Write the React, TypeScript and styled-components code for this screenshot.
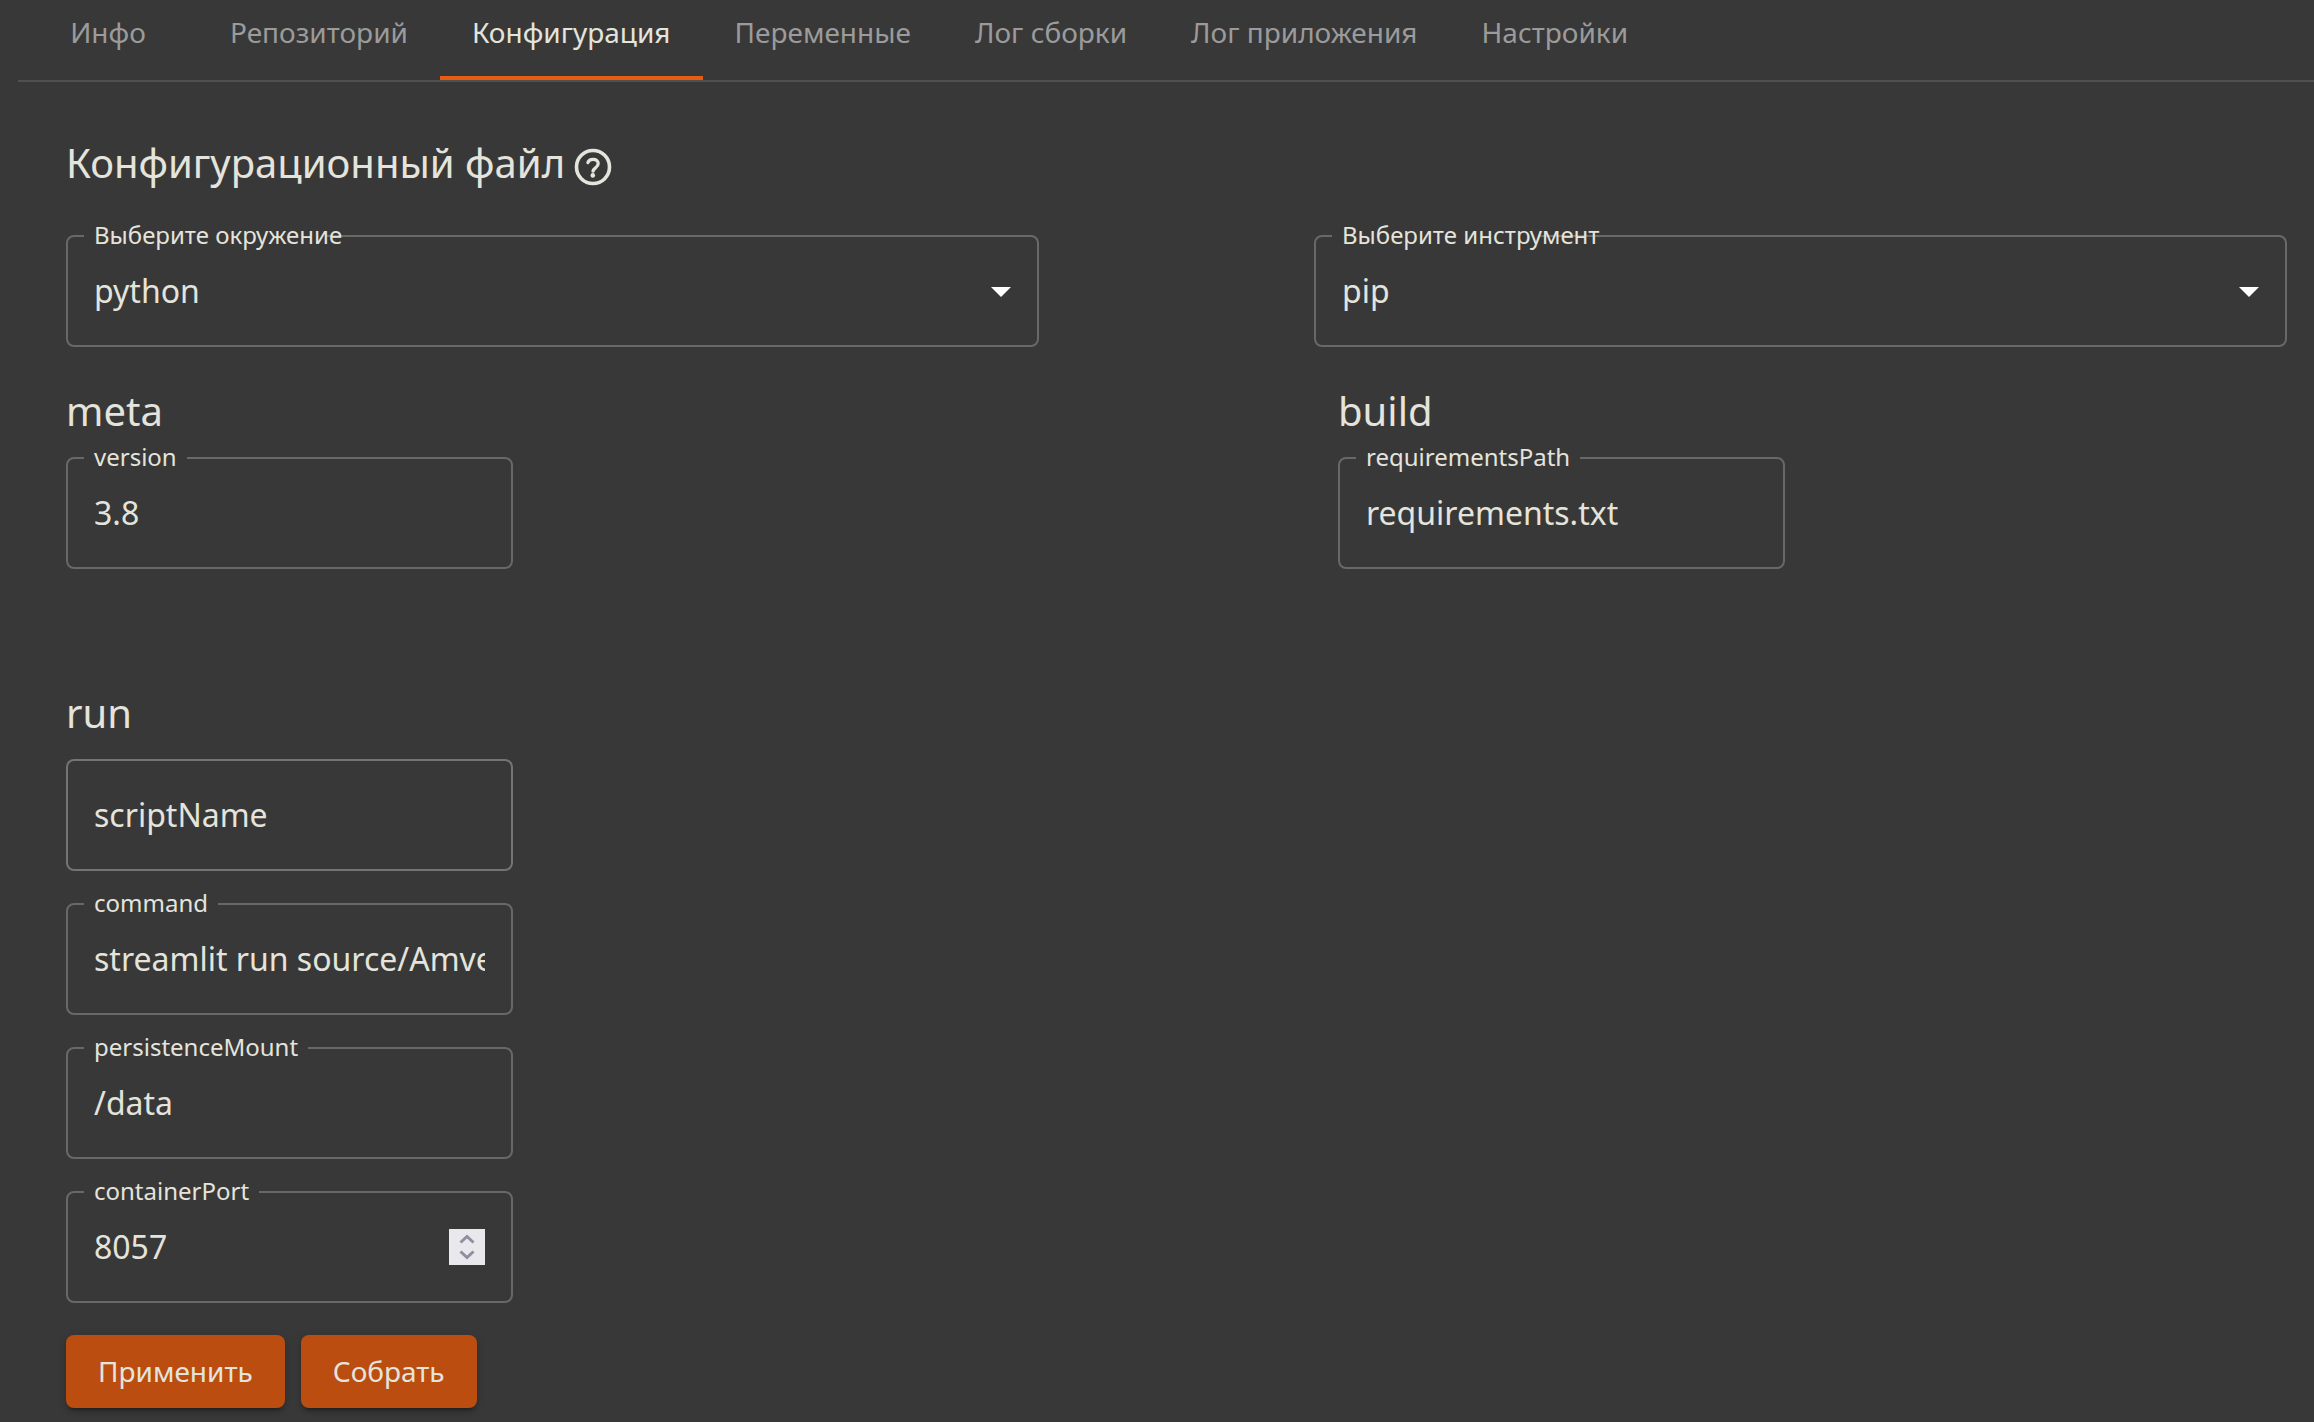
import React from 'react';
import styled, { createGlobalStyle, css } from 'styled-components';

const GlobalStyle = createGlobalStyle`
  *, *::before, *::after { box-sizing: border-box; }
  html, body { margin: 0; background: #383838; }
  body {
    min-height: 1422px;
    overflow: hidden;
    color: #e4e4dc;
    font-family: 'Noto Sans', 'Open Sans', sans-serif;
  }
`;

const Page = styled.div`
  height: 1422px;
  padding-left: 18px;
  overflow: hidden;
`;

const Tabs = styled.nav`
  display: flex;
  height: 82px;
  border-bottom: 2px solid #505050;
`;

const Tab = styled.button<{ $active?: boolean }>`
  min-width: 180px;
  height: 80px;
  padding: 0 32px 12px;
  border: 0;
  border-bottom: 4px solid ${(p) => (p.$active ? '#e65c12' : 'transparent')};
  background: none;
  color: ${(p) => (p.$active ? '#e4e4dc' : '#9b9b9b')};
  font: 400 28px/35px 'Noto Sans', sans-serif;
  white-space: nowrap;
`;

const Content = styled.main`
  padding: 53px 27px 0 48px;
`;

const Title = styled.h1`
  display: flex;
  align-items: center;
  gap: 9px;
  height: 56px;
  margin: 0;
  font-size: 40px;
  font-weight: 400;
  line-height: 56px;
`;

const SectionTitle = styled.h2`
  height: 56px;
  margin: 0;
  font-size: 40px;
  font-weight: 400;
  line-height: 56px;
`;

const HelpIcon = styled.svg`
  width: 38px;
  height: 38px;
  margin-top: 7px;
  fill: none;
  stroke: currentColor;
`;

const SelectRow = styled.div`
  display: flex;
  justify-content: space-between;
  margin-top: 44px;
`;

const Sections = styled.div`
  display: grid;
  grid-template-columns: 1272px 447px;
  margin-top: 36px;
`;

const Section = styled.section<{ $gap?: number }>`
  display: flex;
  flex-direction: column;
  ${(p) =>
    p.$gap &&
    css`
      > h2 { margin-bottom: ${p.$gap}px; }
    `}
`;

const RunSection = styled(Section)`
  width: 447px;
  margin-top: 116px;
`;

const FieldStack = styled.div`
  display: flex;
  flex-direction: column;
  gap: 32px;
`;

const Field = styled.div<{ $wide?: boolean }>`
  width: ${(p) => (p.$wide ? 973 : 447)}px;
  height: 112px;
`;

const Outline = styled.fieldset<{ $labelled: boolean }>`
  display: block;
  min-width: 0;
  width: 100%;
  height: ${(p) => (p.$labelled ? 123 : 112)}px;
  margin: ${(p) => (p.$labelled ? '-11px' : '0')} 0 0;
  padding: 0 26px 0 16px;
  border: 2px solid ${(p) => (p.$labelled ? '#686868' : '#747474')};
  border-radius: 8px;
`;

const Label = styled.legend<{ $notch?: number }>`
  height: 24px;
  padding: 0 10px;
  width: ${(p) => (p.$notch ? `${p.$notch}px` : 'auto')};
  font-size: 24px;
  line-height: 22px;
  white-space: nowrap;
`;

const FieldBody = styled.div<{ $labelled: boolean }>`
  display: flex;
  align-items: center;
  justify-content: space-between;
  height: 46px;
  margin: ${(p) => (p.$labelled ? 20 : 31)}px 0 0 10px;
`;

const Value = styled.span`
  flex: 1;
  overflow: hidden;
  font-size: 32px;
  line-height: 46px;
  white-space: nowrap;
`;

const Arrow = styled.svg`
  width: 48px;
  height: 48px;
  margin-right: -14px;
  fill: #fff;
`;

const Stepper = styled.svg`
  width: 36px;
  height: 36px;
  background: #e9e9ed;
  fill: none;
  stroke: #8f8f9d;
  stroke-width: 3;
`;

const Actions = styled.div`
  display: flex;
  gap: 16px;
  margin-top: 32px;
`;

const Button = styled.button`
  height: 73px;
  padding: 0 32px;
  border: 0;
  border-radius: 8px;
  background: #bb4d10;
  color: #e4e4dc;
  font: 400 28px/49px 'Noto Sans', sans-serif;
  box-shadow: 0 6px 2px -4px rgba(0, 0, 0, 0.2), 0 4px 4px rgba(0, 0, 0, 0.14),
    0 2px 10px rgba(0, 0, 0, 0.12);
`;

type FieldProps = {
  label?: string;
  value: string;
  wide?: boolean;
  notch?: number;
  children?: React.ReactNode;
};

function OutlinedField({ label, value, wide, notch, children }: FieldProps) {
  return (
    <Field $wide={wide}>
      <Outline $labelled={!!label}>
        {label && <Label $notch={notch}>{label}</Label>}
        <FieldBody $labelled={!!label}>
          <Value>{value}</Value>
          {children}
        </FieldBody>
      </Outline>
    </Field>
  );
}

const DropDownArrow = () => (
  <Arrow viewBox="0 0 24 24">
    <path d="M7 10l5 5 5-5z" />
  </Arrow>
);

const tabs = [
  'Инфо',
  'Репозиторий',
  'Конфигурация',
  'Переменные',
  'Лог сборки',
  'Лог приложения',
  'Настройки',
];

export default function App() {
  return (
    <Page>
      <GlobalStyle />
      <Tabs>
        {tabs.map((name) => (
          <Tab key={name} $active={name === 'Конфигурация'}>
            {name}
          </Tab>
        ))}
      </Tabs>
      <Content>
        <Title>
          Конфигурационный файл
          <HelpIcon viewBox="0 0 38 38">
            <circle cx="19" cy="19" r="16.5" strokeWidth="3.6" />
            <path
              d="M13.9 14.6C14.6 12.5 16.5 11.4 19.1 11.4C22.1 11.4 24.2 13 24.2 15.6C24.2 17.6 23 18.7 21.6 19.8C20.1 21 19.2 21.7 19 23.2"
              strokeWidth="3.3"
              strokeLinecap="round"
            />
            <circle cx="18.8" cy="27.4" r="2.3" fill="currentColor" stroke="none" />
          </HelpIcon>
        </Title>
        <SelectRow>
          <OutlinedField wide label="Выберите окружение" value="python" notch={243}>
            <DropDownArrow />
          </OutlinedField>
          <OutlinedField wide label="Выберите инструмент" value="pip" notch={206}>
            <DropDownArrow />
          </OutlinedField>
        </SelectRow>
        <Sections>
          <Section $gap={18}>
            <SectionTitle>meta</SectionTitle>
            <OutlinedField label="version" value="3.8" />
          </Section>
          <Section $gap={18}>
            <SectionTitle>build</SectionTitle>
            <OutlinedField label="requirementsPath" value="requirements.txt" />
          </Section>
        </Sections>
        <RunSection $gap={18}>
          <SectionTitle>run</SectionTitle>
          <FieldStack>
            <OutlinedField value="scriptName" />
            <OutlinedField label="command" value="streamlit run source/Amvera" />
            <OutlinedField label="persistenceMount" value="/data" />
            <OutlinedField label="containerPort" value="8057">
              <Stepper viewBox="0 0 36 36">
                <path d="M11.5 13.5L18 7.5L24.5 13.5M11.5 22.5L18 28.5L24.5 22.5" />
              </Stepper>
            </OutlinedField>
          </FieldStack>
        </RunSection>
        <Actions>
          <Button>Применить</Button>
          <Button>Собрать</Button>
        </Actions>
      </Content>
    </Page>
  );
}
